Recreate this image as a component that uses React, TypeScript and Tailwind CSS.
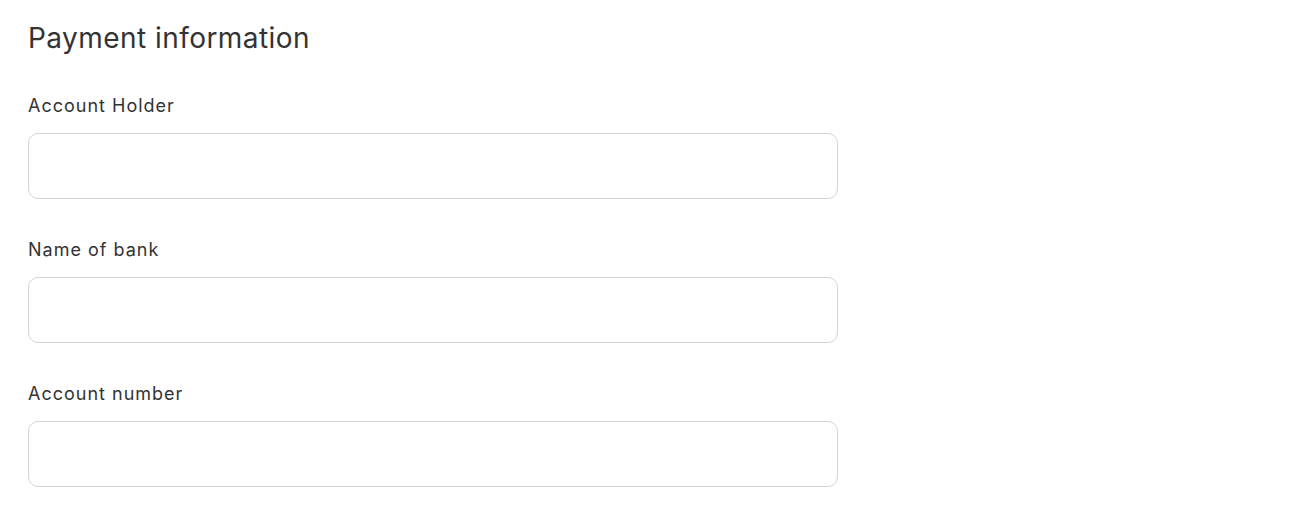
export default function App() {
  const fields = ["Account Holder", "Name of bank", "Account number"];
  return (
    <div className="min-h-screen bg-white px-7 pt-[18px] text-[#333]" style={{ fontFamily: "Inter, sans-serif" }}>
      <h1 className="text-[28px] leading-[40px] tracking-[0.45px]">Payment information</h1>
      <div className="mt-[34px] flex w-[810px] flex-col gap-[37px]">
        {fields.map((f) => (
          <div key={f} className="flex flex-col">
            <label className="text-[18px] leading-[28px] tracking-[1px]">{f}</label>
            <input className="mt-[13px] h-[66px] rounded-[10px] border border-[#d4d4d4] bg-white outline-none" />
          </div>
        ))}
      </div>
    </div>
  );
}
